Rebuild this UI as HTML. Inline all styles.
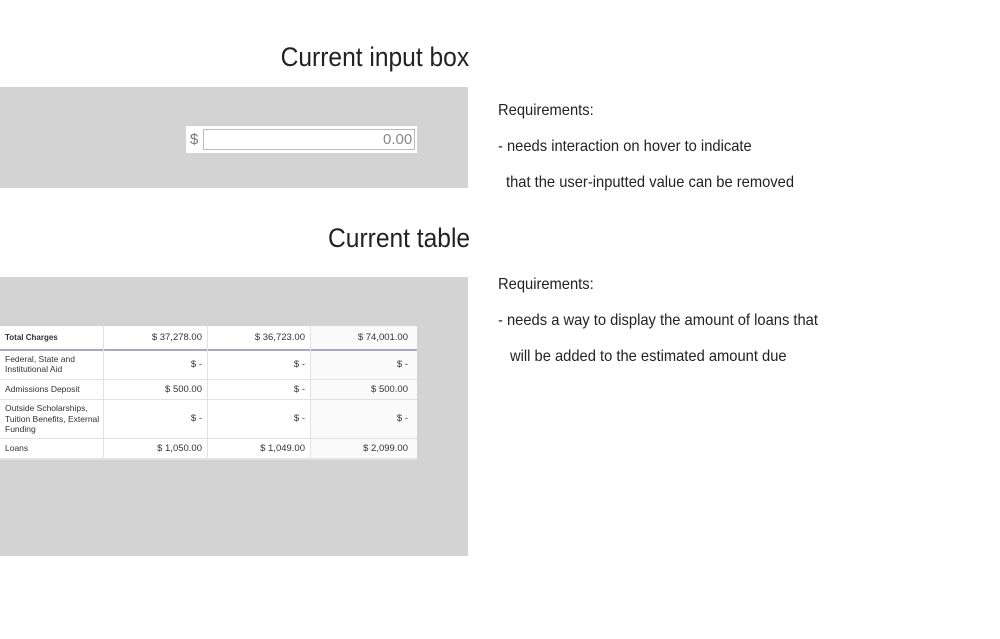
<!DOCTYPE html>
<html><head><style>
body{margin:0;width:1000px;height:639px;background:#fff;position:relative;font-family:"Liberation Sans",sans-serif;overflow:hidden}
.a{position:absolute}
.h{font-size:27px;color:#222;transform:scaleX(.91);transform-origin:right top;white-space:nowrap}
.t{font-size:16px;color:#222;transform:scaleX(.92);transform-origin:left top;white-space:nowrap}
.c{position:absolute;font-size:9.5px;color:#333;white-space:nowrap}
.r{text-align:right}
</style></head><body>
<div class="a h" style="right:531px;top:42px">Current input box</div>
<div class="a" style="left:0;top:87px;width:468px;height:101px;background:#d3d3d3"></div>
<div class="a" style="left:186px;top:126px;width:231px;height:27px;background:#fff"></div>
<div class="a" style="left:190px;top:131px;font-size:15px;color:#777">$</div>
<div class="a" style="left:203px;top:129px;width:210px;height:19px;border:1px solid #bbb;background:#fff"></div>
<div class="a" style="left:383px;top:131px;font-size:15px;color:#888">0.00</div>

<div class="a h" style="right:530px;top:223px">Current table</div>
<div class="a" style="left:0;top:277px;width:468px;height:279px;background:#d3d3d3"></div>
<div class="a" style="left:0;top:326px;width:417px;height:134px;background:#fff"></div>
<div class="a" style="left:310px;top:326px;width:107px;height:134px;background:#fafafa"></div>
<div class="a" style="left:0;top:349px;width:417px;height:2px;background:#a9a4c8"></div>
<div class="a" style="left:0;top:379px;width:417px;height:1px;background:#e2e2e2"></div>
<div class="a" style="left:0;top:399px;width:417px;height:1px;background:#e2e2e2"></div>
<div class="a" style="left:0;top:438px;width:417px;height:1px;background:#e2e2e2"></div>
<div class="a" style="left:0;top:458px;width:417px;height:2px;background:#e2e2e2"></div>
<div class="a" style="left:103px;top:326px;width:1px;height:134px;background:#e2e2e2"></div>
<div class="a" style="left:207px;top:326px;width:1px;height:134px;background:#e2e2e2"></div>
<div class="a" style="left:310px;top:326px;width:1px;height:134px;background:#e2e2e2"></div>
<div class="c" style="left:5px;top:333px;font-weight:bold;font-size:8px">Total Charges</div>
<div class="c" style="left:5px;top:354px;font-size:8.5px;line-height:10px">Federal, State and<br>Institutional Aid</div>
<div class="c" style="left:5px;top:384px;font-size:8.5px">Admissions Deposit</div>
<div class="c" style="left:5px;top:403px;font-size:8.5px;line-height:10.5px">Outside Scholarships,<br>Tuition Benefits, External<br>Funding</div>
<div class="c" style="left:5px;top:443px;font-size:8.5px">Loans</div>
<div class="c r" style="right:798px;top:332px">$ 37,278.00</div>
<div class="c r" style="right:695px;top:332px">$ 36,723.00</div>
<div class="c r" style="right:592px;top:332px">$ 74,001.00</div>
<div class="c r" style="right:798px;top:359px">$ -</div>
<div class="c r" style="right:695px;top:359px">$ -</div>
<div class="c r" style="right:592px;top:359px">$ -</div>
<div class="c r" style="right:798px;top:384px">$ 500.00</div>
<div class="c r" style="right:695px;top:384px">$ -</div>
<div class="c r" style="right:592px;top:384px">$ 500.00</div>
<div class="c r" style="right:798px;top:413px">$ -</div>
<div class="c r" style="right:695px;top:413px">$ -</div>
<div class="c r" style="right:592px;top:413px">$ -</div>
<div class="c r" style="right:798px;top:443px">$ 1,050.00</div>
<div class="c r" style="right:695px;top:443px">$ 1,049.00</div>
<div class="c r" style="right:592px;top:443px">$ 2,099.00</div>

<div class="a t" style="left:498px;top:102px">Requirements:</div>
<div class="a t" style="left:498px;top:138px">- needs interaction on hover to indicate</div>
<div class="a t" style="left:506px;top:174px">that the user-inputted value can be removed</div>
<div class="a t" style="left:498px;top:276px">Requirements:</div>
<div class="a t" style="left:498px;top:312px">- needs a way to display the amount of loans that</div>
<div class="a t" style="left:510px;top:348px">will be added to the estimated amount due</div>
</body></html>
